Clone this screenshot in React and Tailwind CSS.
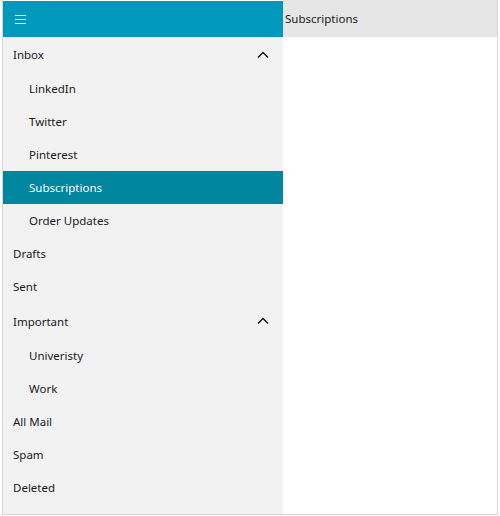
import React from "react";

const Chevron = () => (
  <svg width="12" height="8" viewBox="0 0 12 8" className="mr-[14px] -mt-[1px]">
    <path d="M1 6.5 L6 1.5 L11 6.5" fill="none" stroke="#111" strokeWidth="1.4" />
  </svg>
);

const Row = ({ label, child, selected, chevron, h }) => (
  <div
    className={`flex items-center justify-between pt-[1px] ${h} ${child ? "pl-[26px]" : "pl-[10px]"} ${
      selected ? "bg-[#00879f] text-white" : "text-[#1a1a1a]"
    }`}
  >
    <span>{label}</span>
    {chevron && <Chevron />}
  </div>
);

export default function App() {
  return (
    <div
      className="w-[496px] h-[515px] ml-[2px] border-l border-r border-b border-[#d6d6d6] flex text-[11.5px]"
      style={{ fontFamily: '"Noto Sans", sans-serif' }}
    >
      <div className="w-[280px] flex flex-col bg-[#f2f2f2] mt-[1px]">
        <div className="h-[36px] bg-[#0099bc] flex items-center pl-[12px]">
          <svg width="11" height="11" viewBox="0 0 11 11">
            <path d="M0 1.5H11M0 5.5H11M0 9.5H11" stroke="#fff" strokeWidth="1" />
          </svg>
        </div>
        <Row label="Inbox" chevron h="h-[35px]" />
        <Row label="LinkedIn" child h="h-[33px]" />
        <Row label="Twitter" child h="h-[33px]" />
        <Row label="Pinterest" child h="h-[33px]" />
        <Row label="Subscriptions" child selected h="h-[33px]" />
        <Row label="Order Updates" child h="h-[33px]" />
        <Row label="Drafts" h="h-[33px]" />
        <Row label="Sent" h="h-[33px]" />
        <Row label="Important" chevron h="h-[36px]" />
        <Row label="Univeristy" child h="h-[33px]" />
        <Row label="Work" child h="h-[33px]" />
        <Row label="All Mail" h="h-[33px]" />
        <Row label="Spam" h="h-[33px]" />
        <Row label="Deleted" h="h-[33px]" />
      </div>
      <div className="flex-1 flex flex-col bg-white">
        <div className="h-[37px] bg-[#e6e6e6] flex items-center pl-[2px] text-[#1a1a1a]">
          Subscriptions
        </div>
      </div>
    </div>
  );
}
